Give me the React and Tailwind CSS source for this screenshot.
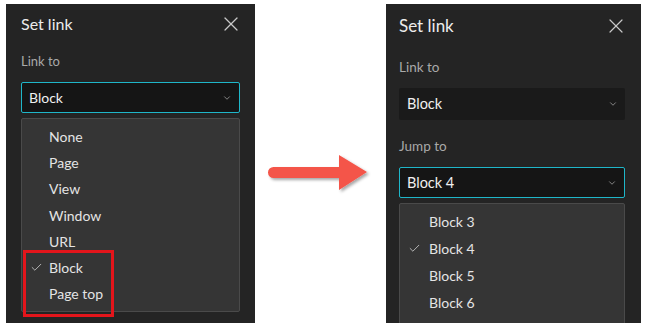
import { X, Check, ChevronDown } from 'lucide-react';

const font = { fontFamily: 'Lato, "Open Sans", sans-serif' };

function Item({ label, checked, h, pl, checkLeft }) {
  return (
    <div className={`relative flex items-center ${h} ${pl} text-[14px] text-[#e4e4e4]`}>
      {checked && <Check className={`absolute ${checkLeft} w-[13px] h-[13px] text-[#d0d0d0]`} strokeWidth={1.5} />}
      {label}
    </div>
  );
}

export default function App() {
  const linkOptions = ['None', 'Page', 'View', 'Window', 'URL', 'Block', 'Page top'];
  const blocks = ['Block 3', 'Block 4', 'Block 5', 'Block 6'];

  return (
    <div className="w-[645px] h-[329px] bg-white flex items-start" style={font}>
      {/* left panel */}
      <div className="relative ml-[6px] mt-[4px] w-[249px] h-[319px] shrink-0 bg-[#242424] px-[15px] flex flex-col">
        <div className="h-[40px] shrink-0 flex items-center justify-between">
          <span className="text-[16px] text-[#ececec]">Set link</span>
          <X className="w-[24px] h-[24px] text-[#c8c8c8] mr-[-3px]" strokeWidth={1.2} />
        </div>
        <div className="mt-[8px] h-[20px] shrink-0 flex items-center text-[13px] text-[#a9a9a9]">Link to</div>
        <div className="mt-[10px] h-[31px] shrink-0 bg-[#151515] border border-[#1fb6c9] rounded-[2px] flex items-center justify-between pl-[7px] pr-[7px]">
          <span className="text-[14px] text-[#f0f0f0]">Block</span>
          <ChevronDown className="w-[10px] h-[10px] text-[#9a9a9a]" strokeWidth={2} />
        </div>
        <div className="mt-[5px] h-[194px] shrink-0 bg-[#353535] border border-[#4a4a4a] rounded-[2px] pt-[4px]">
          {linkOptions.map((o) => (
            <Item key={o} label={o} checked={o === 'Block'} h="h-[26.3px]" pl="pl-[27px]" checkLeft="left-[8px]" />
          ))}
        </div>
        <div className="absolute left-[17px] top-[246px] w-[91px] h-[67px] border-[3px] border-[#e3151b]" />
      </div>

      {/* arrow */}
      <div className="w-[131px] shrink-0 flex justify-start pl-[10px] pt-[150px]">
        <svg width="110" height="48" viewBox="0 0 110 48">
          <defs>
            <filter id="sh" x="-10%" y="-20%" width="130%" height="160%">
              <feDropShadow dx="2" dy="2" stdDeviation="1.5" floodColor="#000" floodOpacity="0.35" />
            </filter>
          </defs>
          <path d="M8.5 17 H74 V5 L102 22 L74 40 V28 H8.5 A5.5 5.5 0 0 1 8.5 17 Z" fill="#f4554a" filter="url(#sh)" />
        </svg>
      </div>

      {/* right panel */}
      <div className="mt-[4px] w-[255px] h-[319px] shrink-0 bg-[#242424] pl-[13px] pr-[16px] flex flex-col overflow-hidden">
        <div className="h-[44px] shrink-0 flex items-center justify-between">
          <span className="text-[17px] text-[#ececec]">Set link</span>
          <X className="w-[24px] h-[24px] text-[#c8c8c8] mr-[-3px]" strokeWidth={1.2} />
        </div>
        <div className="mt-[9px] h-[20px] shrink-0 flex items-center text-[13.5px] text-[#a9a9a9]">Link to</div>
        <div className="mt-[11px] h-[32px] shrink-0 bg-[#1a1a1a] rounded-[2px] flex items-center justify-between pl-[8px] pr-[7px]">
          <span className="text-[14.5px] text-[#f0f0f0]">Block</span>
          <ChevronDown className="w-[10px] h-[10px] text-[#9a9a9a]" strokeWidth={2} />
        </div>
        <div className="mt-[16px] h-[20px] shrink-0 flex items-center text-[13.5px] text-[#a9a9a9]">Jump to</div>
        <div className="mt-[11px] h-[31px] shrink-0 bg-[#151515] border border-[#1fb6c9] rounded-[2px] flex items-center justify-between pl-[7px] pr-[7px]">
          <span className="text-[14.5px] text-[#f0f0f0]">Block 4</span>
          <ChevronDown className="w-[10px] h-[10px] text-[#9a9a9a]" strokeWidth={2} />
        </div>
        <div className="mt-[5px] h-[160px] shrink-0 bg-[#353535] border border-[#4a4a4a] rounded-[2px] pt-[4px]">
          {blocks.map((b) => (
            <Item key={b} label={b} checked={b === 'Block 4'} h="h-[27px]" pl="pl-[29px]" checkLeft="left-[8px]" />
          ))}
        </div>
      </div>
    </div>
  );
}
